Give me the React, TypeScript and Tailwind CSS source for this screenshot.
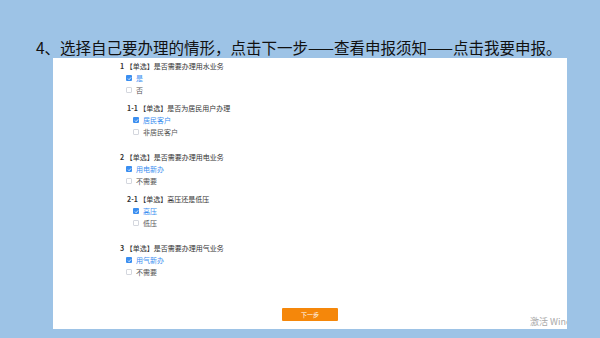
import React from "react"

type Question = {
  no: string
  title: string
  options: string[]
  checked: number
  sub?: Question
}

const questions: Question[] = [
  {
    no: "1",
    title: "【单选】是否需要办理用水业务",
    options: ["是", "否"],
    checked: 0,
    sub: { no: "1-1", title: "【单选】是否为居民用户办理", options: ["居民客户", "非居民客户"], checked: 0 },
  },
  {
    no: "2",
    title: "【单选】是否需要办理用电业务",
    options: ["用电新办", "不需要"],
    checked: 0,
    sub: { no: "2-1", title: "【单选】高压还是低压", options: ["高压", "低压"], checked: 0 },
  },
  {
    no: "3",
    title: "【单选】是否需要办理用气业务",
    options: ["用气新办", "不需要"],
    checked: 0,
  },
]

function Check({ on }: { on: boolean }) {
  if (!on) {
    return <span className="block w-[6px] h-[6px] rounded-[1px] border border-[#d4d7de] bg-white" />
  }
  return (
    <span className="flex w-[6px] h-[6px] rounded-[1px] bg-[#3a8ef0] items-center justify-center">
      <svg viewBox="0 0 10 10" className="w-[5px] h-[5px]">
        <path d="M2 5.2 L4.2 7.4 L8.2 2.8" stroke="white" strokeWidth="1.6" fill="none" />
      </svg>
    </span>
  )
}

function Block({ q }: { q: Question }) {
  return (
    <div>
      <div className="h-[12px] flex items-center gap-[1.5px] text-[#333]">
        <span className="font-bold">{q.no}</span>
        <span>{q.title}</span>
      </div>
      {q.options.map((o, i) => (
        <div key={o} className="h-[12px] flex items-center gap-[4px] pl-[6px]">
          <Check on={i === q.checked} />
          <span className={i === q.checked ? "text-[#3a8ef0]" : "text-[#555]"}>{o}</span>
        </div>
      ))}
      {q.sub && (
        <div className="mt-[6px] pl-[7px]">
          <Block q={q.sub} />
        </div>
      )}
    </div>
  )
}

export default function App() {
  return (
    <div className="w-[600px] h-[338px] bg-[#9dc3e6] flex flex-col font-['Noto_Sans_CJK_SC',sans-serif] overflow-hidden">
      <div className="h-[58px] pt-[37px] pl-[36px] text-[15.5px] leading-[20px] text-[#111] whitespace-nowrap">
        4、选择自己要办理的情形，点击下一步——查看申报须知——点击我要申报。
      </div>
      <div className="relative ml-[53px] w-[514px] h-[271px] bg-white flex flex-col overflow-hidden">
        <div className="pl-[67px] pt-[2px] flex flex-col gap-[13px] text-[7px] leading-[12px]">
          {questions.map((q) => (
            <Block key={q.no} q={q} />
          ))}
        </div>
        <div className="flex-1" />
        <div className="flex justify-center mb-[8px]">
          <button className="w-[56px] h-[13px] bg-[#f5870a] rounded-[1px] text-white text-[6px] leading-[13px]">
            下一步
          </button>
        </div>
        <div className="absolute left-[477px] top-[258px] whitespace-nowrap text-[9px] leading-[12px] text-[#a8a8a8]">
          激活 Windows
        </div>
      </div>
    </div>
  )
}
